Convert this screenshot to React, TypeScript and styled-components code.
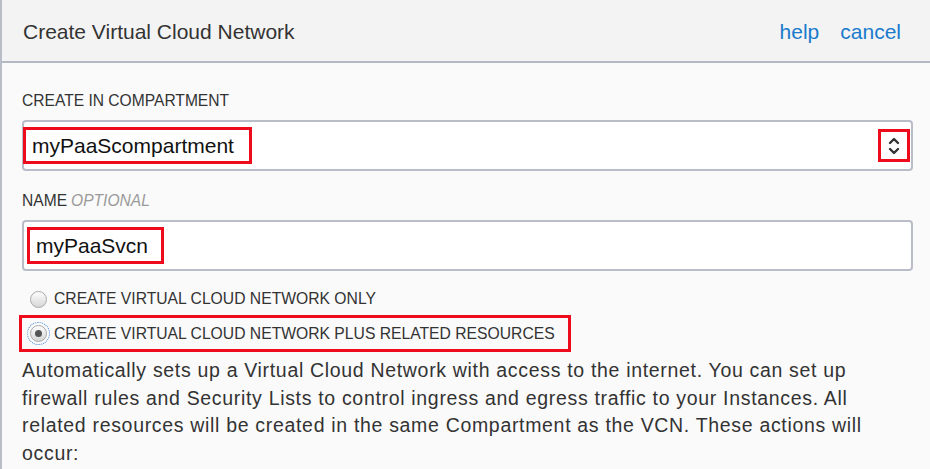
import React, { useState } from 'react';
import styled, { createGlobalStyle } from 'styled-components';

const GlobalStyle = createGlobalStyle`
  html, body {
    margin: 0;
    padding: 0;
    background: #fafafa;
  }
  body {
    font-family: "Liberation Sans", Arial, sans-serif;
    color: #333;
  }
`;

const Panel = styled.div`
  width: 930px;
  height: 469px;
  overflow: hidden;
  border-left: 2px solid #b9bdc7;
  box-sizing: border-box;
  background: #fafafa;
`;

const Header = styled.div`
  height: 63px;
  display: flex;
  align-items: center;
  justify-content: space-between;
  padding: 2px 29px 0 21px;
  box-sizing: border-box;
  background: #f3f3f3;
  border-bottom: 2px solid #b5b9c3;
`;

const Title = styled.h1`
  margin: 0;
  font-size: 21px;
  font-weight: normal;
  color: #333;
`;

const Links = styled.div`
  display: flex;
  gap: 21px;
`;

const Link = styled.a`
  font-size: 21px;
  color: #1a7bcd;
  text-decoration: none;
  cursor: pointer;
`;

const Body = styled.div`
  padding: 29px 17px 0 20px;
  display: flex;
  flex-direction: column;
`;

const Label = styled.div`
  font-size: 15.6px;
  line-height: 17px;
  color: #333;
  margin-bottom: 11px;
`;

const Optional = styled.span`
  font-style: italic;
  color: #9a9a9a;
  margin-left: 4px;
`;

const Field = styled.div<{ gap?: number }>`
  height: 51px;
  box-sizing: border-box;
  border: 2px solid #b9bdc7;
  border-radius: 4px;
  background: #fff;
  display: flex;
  align-items: center;
  justify-content: space-between;
  padding: 0 1px 0 0;
  margin-bottom: ${(p) => p.gap ?? 0}px;
`;

const Highlight = styled.div`
  border: 3px solid #ee0c1c;
  box-sizing: border-box;
  display: flex;
  align-items: center;
`;

const ValueBox = styled(Highlight)<{ inset: number; trail: number }>`
  height: 37px;
  margin-left: ${(p) => p.inset}px;
  padding: 0 ${(p) => p.trail}px 0 6px;
  font-size: 21px;
  color: #111;
`;

const ChevronBox = styled(Highlight)`
  width: 32px;
  height: 33px;
  justify-content: center;
`;

const RadioRow = styled.label`
  display: flex;
  align-items: center;
  gap: 7px;
  font-size: 15.7px;
  color: #333;
  height: 24px;
  cursor: pointer;
`;

const RadioOnlyRow = styled(RadioRow)`
  padding-left: 8px;
  margin-top: 16px;
`;

const RadioBox = styled(Highlight)`
  width: 552px;
  height: 37px;
  margin: 4px 0 0 -3px;
  padding-left: 8px;
`;

const Radio = styled.span<{ checked?: boolean; focused?: boolean }>`
  position: relative;
  width: 17px;
  height: 17px;
  border-radius: 50%;
  box-sizing: border-box;
  border: 1px solid #a9a9a9;
  background: linear-gradient(#fdfdfd, #d6d6d6);
  flex: none;
  outline: ${(p) => (p.focused ? '1px dotted #4a8ed8' : 'none')};
  outline-offset: 2px;
  &::after {
    content: '';
    display: ${(p) => (p.checked ? 'block' : 'none')};
    position: absolute;
    left: 4px;
    top: 4px;
    width: 7px;
    height: 7px;
    border-radius: 50%;
    background: #555;
  }
`;

const Description = styled.p`
  margin: 5px 0 0;
  font-size: 19.5px;
  letter-spacing: 0.68px;
  line-height: 27.5px;
  color: #333;
`;

const Chevrons = () => (
  <svg width="16" height="22" viewBox="0 0 16 22" fill="none" stroke="#333" strokeWidth="2.4" strokeLinecap="round" strokeLinejoin="round">
    <path d="M4 8 L8 4 L12 8" />
    <path d="M4 14 L8 18 L12 14" />
  </svg>
);

const App: React.FC = () => {
  const [mode, setMode] = useState<'only' | 'plus'>('plus');

  return (
    <Panel>
      <GlobalStyle />
      <Header>
        <Title>Create Virtual Cloud Network</Title>
        <Links>
          <Link>help</Link>
          <Link>cancel</Link>
        </Links>
      </Header>
      <Body>
        <Label>CREATE IN COMPARTMENT</Label>
        <Field gap={21}>
          <ValueBox inset={-1} trail={15}>myPaaScompartment</ValueBox>
          <ChevronBox>
            <Chevrons />
          </ChevronBox>
        </Field>
        <Label>
          NAME<Optional>OPTIONAL</Optional>
        </Label>
        <Field>
          <ValueBox inset={3} trail={13}>myPaaSvcn</ValueBox>
        </Field>
        <RadioOnlyRow onClick={() => setMode('only')}>
          <Radio checked={mode === 'only'} />
          CREATE VIRTUAL CLOUD NETWORK ONLY
        </RadioOnlyRow>
        <RadioBox>
          <RadioRow onClick={() => setMode('plus')}>
            <Radio checked={mode === 'plus'} focused />
            CREATE VIRTUAL CLOUD NETWORK PLUS RELATED RESOURCES
          </RadioRow>
        </RadioBox>
        <Description>
          Automatically sets up a Virtual Cloud Network with access to the internet. You can set up
          firewall rules and Security Lists to control ingress and egress traffic to your Instances. All
          related resources will be created in the same Compartment as the VCN. These actions will
          occur:
        </Description>
      </Body>
    </Panel>
  );
};

export default App;
